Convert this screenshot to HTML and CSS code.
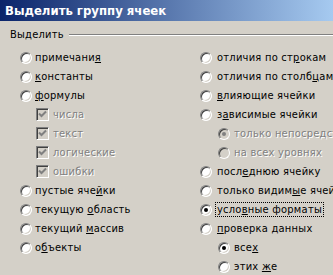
FILE: index.html
```html
<!DOCTYPE html>
<html lang="ru">
<head>
<meta charset="utf-8">
<title>Выделить группу ячеек</title>
<link rel="stylesheet" href="styles.css">
</head>
<body>
<div class="dialog">
  <div class="titlebar">Выделить группу ячеек</div>
  <div class="group">
    <div class="group-head"><span class="group-label">Выделить</span><span class="group-line"></span></div>
    <div class="cols">
      <div class="col col-left">
        <div class="row"><span class="radio"></span><span class="lbl">примечани<u>я</u></span></div>
        <div class="row"><span class="radio"></span><span class="lbl"><u>к</u>онстанты</span></div>
        <div class="row"><span class="radio"></span><span class="lbl"><u>ф</u>ормулы</span></div>
        <div class="row sub"><span class="check"><svg width="9" height="9" viewBox="0 0 9 9"><path d="M1 3.5 L3.5 6 L8 1.5" stroke="#808080" stroke-width="2" fill="none"/></svg></span><span class="lbl dis">числа</span></div>
        <div class="row sub"><span class="check"><svg width="9" height="9" viewBox="0 0 9 9"><path d="M1 3.5 L3.5 6 L8 1.5" stroke="#808080" stroke-width="2" fill="none"/></svg></span><span class="lbl dis">текст</span></div>
        <div class="row sub"><span class="check"><svg width="9" height="9" viewBox="0 0 9 9"><path d="M1 3.5 L3.5 6 L8 1.5" stroke="#808080" stroke-width="2" fill="none"/></svg></span><span class="lbl dis">логические</span></div>
        <div class="row sub"><span class="check"><svg width="9" height="9" viewBox="0 0 9 9"><path d="M1 3.5 L3.5 6 L8 1.5" stroke="#808080" stroke-width="2" fill="none"/></svg></span><span class="lbl dis">ошибки</span></div>
        <div class="row"><span class="radio"></span><span class="lbl">пустые яче<u>й</u>ки</span></div>
        <div class="row"><span class="radio"></span><span class="lbl">текущую <u>о</u>бласть</span></div>
        <div class="row"><span class="radio"></span><span class="lbl">текущий <u>м</u>ассив</span></div>
        <div class="row"><span class="radio"></span><span class="lbl">о<u>б</u>ъекты</span></div>
      </div>
      <div class="col col-right">
        <div class="row"><span class="radio"></span><span class="lbl">отличия по ст<u>р</u>окам</span></div>
        <div class="row"><span class="radio"></span><span class="lbl">отличия по столб<u>ц</u>ам</span></div>
        <div class="row"><span class="radio"></span><span class="lbl"><u>в</u>лияющие ячейки</span></div>
        <div class="row"><span class="radio"></span><span class="lbl">з<u>а</u>висимые ячейки</span></div>
        <div class="row sub2"><span class="radio disabled checked"></span><span class="lbl dis">только непосредственно</span></div>
        <div class="row sub2"><span class="radio disabled"></span><span class="lbl dis">на всех уровнях</span></div>
        <div class="row"><span class="radio"></span><span class="lbl">посл<u>е</u>днюю ячейку</span></div>
        <div class="row"><span class="radio"></span><span class="lbl">только видим<u>ы</u>е ячейки</span></div>
        <div class="row"><span class="radio checked"></span><span class="lbl focus">усло<u>в</u>ные форматы</span></div>
        <div class="row"><span class="radio"></span><span class="lbl"><u>п</u>роверка данных</span></div>
        <div class="row sub2"><span class="radio checked"></span><span class="lbl">все<u>х</u></span></div>
        <div class="row sub2"><span class="radio"></span><span class="lbl">этих <u>ж</u>е</span></div>
      </div>
    </div>
  </div>
</div>
</body>
</html>
```

FILE: styles.css
```css
html, body {
  margin: 0;
  padding: 0;
  background: #d4d0c8;
}
.dialog {
  width: 333px;
  height: 275px;
  overflow: hidden;
  background: #d4d0c8;
  font-family: "DejaVu Sans Condensed", "DejaVu Sans", sans-serif;
  font-stretch: condensed;
  font-size: 11px;
  letter-spacing: 0.25px;
  color: #000;
}
.titlebar {
  height: 21px;
  line-height: 21px;
  padding-left: 5px;
  color: #fff;
  font-weight: bold;
  font-size: 13px;
  letter-spacing: 0;
  background: linear-gradient(to right, #0a246a, #a6caf0);
  white-space: nowrap;
}
.group {
  padding-top: 7px;
}
.group-head {
  display: flex;
  align-items: center;
  height: 14px;
  padding-left: 8px;
}
.group-label {
  padding: 0 5px 0 2px;
  line-height: 14px;
}
.group-line {
  flex: 1;
  height: 0;
  border-top: 1px solid #808080;
  border-bottom: 1px solid #fff;
}
.cols {
  display: flex;
  margin-top: 6px;
}
.col-left {
  width: 180px;
  padding-left: 20px;
}
.col-right {
  flex: 1;
  white-space: nowrap;
  overflow: hidden;
}
.row {
  height: 19px;
  display: flex;
  align-items: center;
  white-space: nowrap;
}
.col-left .lbl { margin-left: 3px; }
.col-right .lbl { margin-left: 5px; }
.row.sub { padding-left: 16px; }
.row.sub .lbl { margin-left: 4px; }
.row.sub2 { padding-left: 18px; }
.row.sub2 .lbl { margin-left: 4px; }
.lbl u { text-decoration: underline; text-underline-offset: 1px; }
.lbl.dis {
  color: #808080;
  text-shadow: 1px 1px 0 #fff;
}
.lbl.focus {
  outline: 1px dotted #000;
  outline-offset: 0;
  padding: 0 1px;
  margin-left: 4px !important;
}
.radio {
  flex: none;
  position: relative;
  width: 12px;
  height: 12px;
  box-sizing: border-box;
  border-radius: 50%;
  border: 1px solid;
  border-color: #808080 #fff #fff #808080;
  background: #fff;
  box-shadow: inset 1px 1px 0 #404040, inset -1px -1px 0 #d4d0c8;
}
.radio.disabled {
  background: #d4d0c8;
}
.radio.checked::after {
  content: "";
  position: absolute;
  left: 3px;
  top: 3px;
  width: 4px;
  height: 4px;
  border-radius: 50%;
  background: #000;
}
.radio.disabled.checked::after {
  background: #808080;
}
.check {
  flex: none;
  width: 13px;
  height: 13px;
  box-sizing: border-box;
  border: 1px solid;
  border-color: #808080 #fff #fff #808080;
  box-shadow: inset 1px 1px 0 #404040, inset -1px -1px 0 #d4d0c8;
  background: #d4d0c8;
  display: flex;
  align-items: center;
  justify-content: center;
}
.check svg { display: block; }
```
